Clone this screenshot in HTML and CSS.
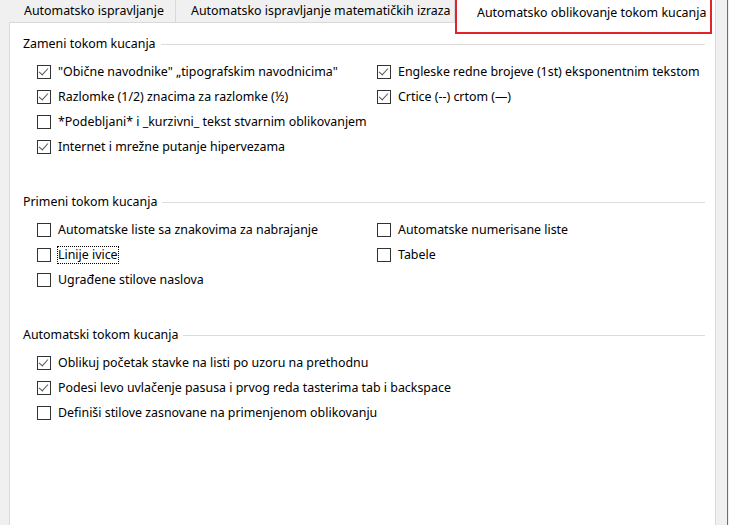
FILE: index.html
```html
<!DOCTYPE html>
<html lang="sr">
<head>
    <meta charset="UTF-8">
    <meta name="viewport" content="width=device-width, initial-scale=1.0">
    <title>Automatsko oblikovanje tokom kucanja</title>
    <link rel="stylesheet" href="styles.css">
</head>
<body>
    <div class="window">
        <div class="tabs">
            <div class="tab tab-first">Automatsko ispravljanje</div>
            <div class="tab tab-second">Automatsko ispravljanje matematičkih izraza</div>
            <div class="tab tab-active">Automatsko oblikovanje tokom kucanja</div>
            <div class="highlight"></div>
        </div>

        <div class="panel">
            <!-- Zameni -->
            <div class="group">
                <div class="group-title"><span>Zameni tokom kucanja</span></div>
                <div class="options">
                    <label class="option"><span class="box checked"></span>"Obične navodnike" „tipografskim navodnicima"</label>
                    <label class="option"><span class="box checked"></span>Engleske redne brojeve (1st) eksponentnim tekstom</label>
                    <label class="option"><span class="box checked"></span>Razlomke (1/2) znacima za razlomke (½)</label>
                    <label class="option"><span class="box checked"></span>Crtice (--) crtom (—)</label>
                    <label class="option"><span class="box"></span>*Podebljani* i _kurzivni_ tekst stvarnim oblikovanjem</label>
                    <div></div>
                    <label class="option"><span class="box checked"></span>Internet i mrežne putanje hipervezama</label>
                </div>
            </div>

            <!-- Primeni -->
            <div class="group">
                <div class="group-title"><span>Primeni tokom kucanja</span></div>
                <div class="options">
                    <label class="option"><span class="box"></span>Automatske liste sa znakovima za nabrajanje</label>
                    <label class="option"><span class="box"></span>Automatske numerisane liste</label>
                    <label class="option"><span class="box"></span><span class="focus">Linije ivice</span></label>
                    <label class="option"><span class="box"></span>Tabele</label>
                    <label class="option"><span class="box"></span>Ugrađene stilove naslova</label>
                </div>
            </div>

            <!-- Automatski -->
            <div class="group">
                <div class="group-title"><span>Automatski tokom kucanja</span></div>
                <div class="options single">
                    <label class="option"><span class="box checked"></span>Oblikuj početak stavke na listi po uzoru na prethodnu</label>
                    <label class="option"><span class="box checked"></span>Podesi levo uvlačenje pasusa i prvog reda tasterima tab i backspace</label>
                    <label class="option"><span class="box"></span>Definiši stilove zasnovane na primenjenom oblikovanju</label>
                </div>
            </div>
        </div>
    </div>
</body>
</html>
```

FILE: styles.css
```css
html, body {
    margin: 0;
    padding: 0;
}
body {
    background-color: #f0f0f0;
    font-family: "Noto Sans", "Liberation Sans", sans-serif;
    font-size: 12.4px;
    color: #000;
    overflow: hidden;
}
.window {
    width: 727px;
    height: 525px;
    border-right: 1px solid #3b7cbd;
    display: flex;
    flex-direction: column;
}

/* tabovi */
.tabs {
    position: relative;
    display: flex;
    height: 22px;
}
.tab {
    box-sizing: border-box;
    height: 22px;
    line-height: 22px;
    border-right: 1px solid #d9d9d9;
    background-color: #f0f0f0;
    white-space: nowrap;
}
.tab-first {
    width: 176px;
    padding-left: 24px;
}
.tab-second {
    width: 279px;
    padding-left: 15px;
}
.tab-active {
    width: 261px;
    height: 23px;
    padding-left: 22px;
    line-height: 25px;
    background-color: #fff;
    position: relative;
    z-index: 1;
}
.highlight {
    position: absolute;
    left: 455px;
    top: -3px;
    width: 253px;
    height: 33px;
    border: 2px solid #e3232b;
    z-index: 2;
}

/* panel */
.panel {
    flex: 1;
    width: 705px;
    margin-left: 9px;
    border: 1px solid #d9d9d9;
    border-bottom: none;
    background-color: #fff;
    padding-top: 13px;
}
.group {
    margin-bottom: 35px;
}
.group-title {
    display: flex;
    align-items: center;
    height: 16px;
    line-height: 16px;
    padding-left: 13px;
    padding-right: 10px;
    margin-bottom: 7px;
}
.group-title::after {
    content: "";
    flex: 1;
    height: 1px;
    margin-left: 5px;
    background-color: #dcdcdc;
}
.options {
    display: grid;
    grid-template-columns: 340px 1fr;
    grid-auto-rows: 25px;
    padding-left: 27px;
}
.options.single {
    grid-template-columns: 1fr;
}
.option {
    display: flex;
    align-items: center;
    white-space: nowrap;
}
.box {
    box-sizing: border-box;
    width: 14px;
    height: 14px;
    border: 1px solid #333;
    background-color: #fff;
    margin-right: 7px;
    flex-shrink: 0;
    position: relative;
}
.box.checked::after {
    content: "";
    position: absolute;
    left: 3px;
    top: 0px;
    width: 4px;
    height: 8px;
    border-right: 1px solid #555;
    border-bottom: 1px solid #555;
    transform: rotate(42deg);
}
.focus {
    outline: 1px dotted #000;
    line-height: 16px;
}
```
